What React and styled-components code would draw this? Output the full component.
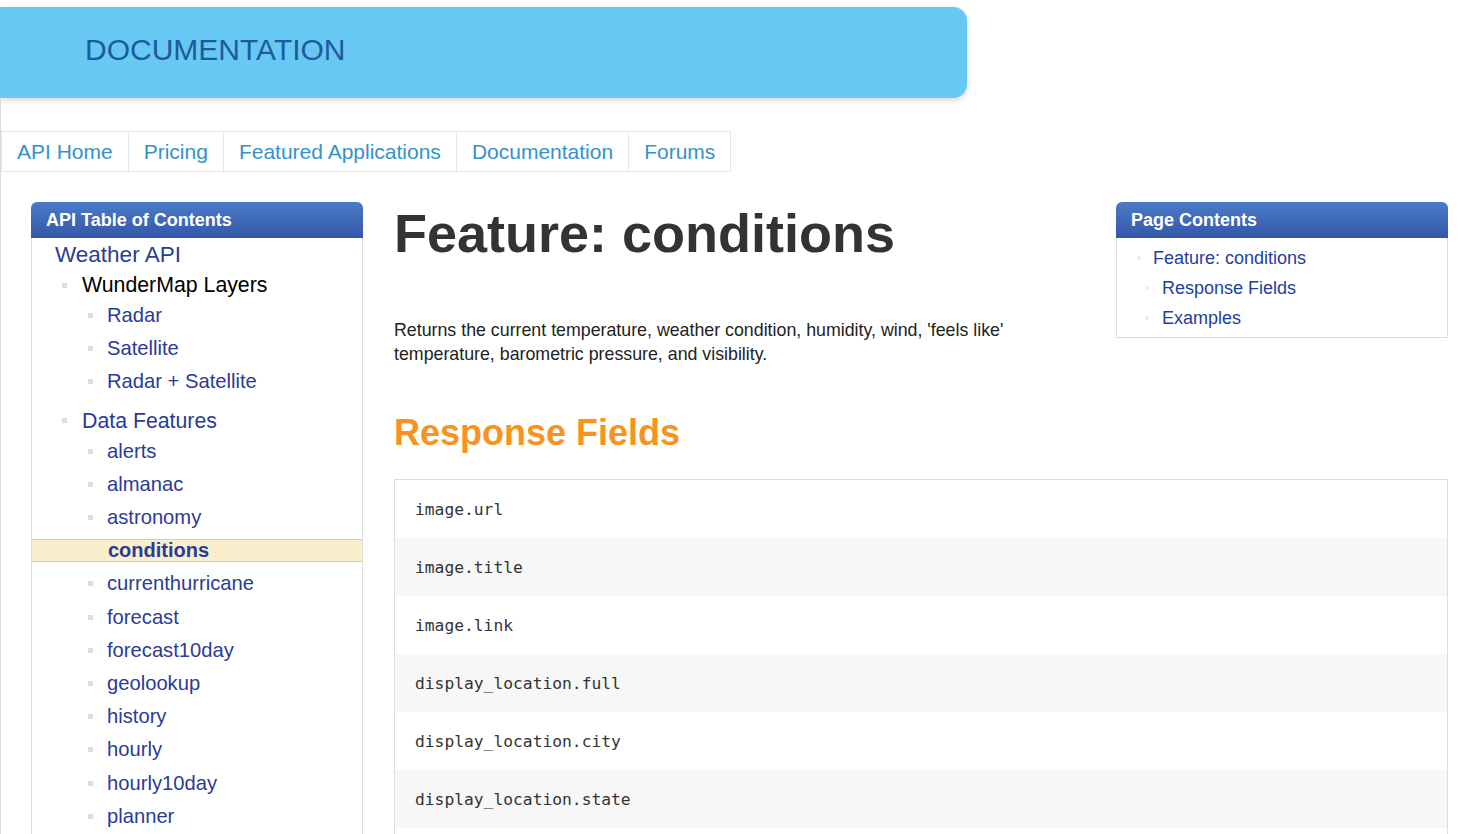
import React from 'react';
import styled, { createGlobalStyle } from 'styled-components';

const GlobalStyle = createGlobalStyle`
  body {
    margin: 0;
    background: #fff;
    font-family: "Liberation Sans", Arial, sans-serif;
  }
`;

const navItems = ['API Home', 'Pricing', 'Featured Applications', 'Documentation', 'Forums'];

const wunderMap = ['Radar', 'Satellite', 'Radar + Satellite'];

const features = [
  'alerts', 'almanac', 'astronomy', 'conditions', 'currenthurricane', 'forecast',
  'forecast10day', 'geolookup', 'history', 'hourly', 'hourly10day', 'planner',
];

const fields = [
  'image.url', 'image.title', 'image.link',
  'display_location.full', 'display_location.city', 'display_location.state',
];

export default function App() {
  return (
    <>
      <GlobalStyle />
      <Banner>
        <BannerTitle>DOCUMENTATION</BannerTitle>
      </Banner>
      <Page>
        <Nav>
          {navItems.map(item => (
            <NavItem key={item}>{item}</NavItem>
          ))}
        </Nav>
        <Columns>
          <Sidebar>
            <BoxHeader>API Table of Contents</BoxHeader>
            <SidebarBody>
              <RootLink>Weather API</RootLink>
              <GroupLabel plain>WunderMap Layers</GroupLabel>
              <SubList>
                {wunderMap.map(item => (
                  <SubItem key={item}>{item}</SubItem>
                ))}
              </SubList>
              <GroupLabel spaced>Data Features</GroupLabel>
              <SubList>
                {features.map(item =>
                  item === 'conditions'
                    ? <CurrentItem key={item}>{item}</CurrentItem>
                    : <SubItem key={item}>{item}</SubItem>
                )}
              </SubList>
            </SidebarBody>
          </Sidebar>

          <Main>
            <Top>
              <Intro>
                <Title>Feature: conditions</Title>
                <Lead>
                  Returns the current temperature, weather condition, humidity, wind, 'feels like'
                  temperature, barometric pressure, and visibility.
                </Lead>
              </Intro>
              <PageContents>
                <BoxHeader>Page Contents</BoxHeader>
                <ContentsBody>
                  <ContentsItem>Feature: conditions</ContentsItem>
                  <ContentsItem nested>Response Fields</ContentsItem>
                  <ContentsItem nested>Examples</ContentsItem>
                </ContentsBody>
              </PageContents>
            </Top>
            <Section>Response Fields</Section>
            <FieldTable>
              {fields.map((f, i) => (
                <FieldRow key={f} striped={i % 2 === 1}>{f}</FieldRow>
              ))}
              <FieldRow />
            </FieldTable>
          </Main>
        </Columns>
      </Page>
    </>
  );
}

const Banner = styled.div`
  margin-top: 7px;
  width: 967px;
  height: 91px;
  background: #67c8f3;
  border-radius: 0 14px 14px 0;
  box-shadow: 0 2px 6px rgba(0, 0, 0, 0.18);
  display: flex;
  align-items: center;
  box-sizing: border-box;
  padding-left: 85px;
  padding-bottom: 6px;
`;

const BannerTitle = styled.div`
  font-size: 30px;
  color: #1d5b9e;
`;

const Page = styled.div`
  border-left: 1px solid #dcdcdc;
  padding-top: 33px;
  min-height: 740px;
`;

const Nav = styled.div`
  display: flex;
  height: 39px;
  width: max-content;
  border: 1px solid #d9ecf5;
  border-right: none;
`;

const NavItem = styled.div`
  display: flex;
  align-items: center;
  padding: 0 15px;
  font-size: 21px;
  color: #3592c8;
  border-right: 1px solid #d9ecf5;
`;

const Columns = styled.div`
  display: flex;
  align-items: flex-start;
  padding: 30px 0 0 30px;
`;

const Sidebar = styled.div`
  width: 332px;
  flex-shrink: 0;
`;

const BoxHeader = styled.div`
  height: 36px;
  display: flex;
  align-items: center;
  padding-left: 15px;
  border-radius: 6px 6px 0 0;
  background: linear-gradient(#4b7bc6, #3457a7);
  color: #fff;
  font-weight: bold;
  font-size: 18px;
`;

const SidebarBody = styled.div`
  border: 1px solid #dddddd;
  border-top: none;
  padding-top: 1px;
  height: 620px;
`;

const RootLink = styled.div`
  padding-left: 23px;
  line-height: 32px;
  font-size: 22.5px;
  color: #2a3b98;
`;

const GroupLabel = styled.div`
  display: flex;
  align-items: center;
  padding-left: 30px;
  margin-top: ${p => (p.spaced ? '8px' : '0')};
  line-height: 28px;
  font-size: 21.3px;
  color: ${p => (p.plain ? '#000' : '#2a3b98')};

  &::before {
    content: '';
    width: 5px;
    height: 5px;
    background: #dddddd;
    margin-right: 15px;
  }
`;

const SubList = styled.div`
  display: flex;
  flex-direction: column;
`;

const SubItem = styled.div`
  display: flex;
  align-items: center;
  padding-left: 56px;
  height: 33.2px;
  font-size: 20.2px;
  color: #2a3b98;

  &::before {
    content: '';
    width: 5px;
    height: 5px;
    background: #dddddd;
    margin-right: 14px;
  }
`;

const CurrentItem = styled.div`
  display: flex;
  align-items: center;
  margin: 5px 0;
  height: 21.2px;
  padding-left: 76px;
  background: #faefcc;
  border-top: 1px solid #f5cf3f;
  border-bottom: 1px solid #f5cf3f;
  font-size: 20px;
  font-weight: bold;
  color: #2a3b98;
`;

const Main = styled.div`
  margin-left: 31px;
  width: 1054px;
  flex-shrink: 0;
`;

const Top = styled.div`
  display: flex;
  align-items: flex-start;
  gap: 26px;
`;

const Intro = styled.div`
  flex: 1;
`;

const Title = styled.h1`
  margin: 4px 0 0;
  font-size: 54px;
  line-height: 54px;
  font-weight: bold;
  color: #333;
`;

const Lead = styled.p`
  margin: 58px 0 0;
  font-size: 17.8px;
  line-height: 24px;
  color: #222;
`;

const PageContents = styled.div`
  width: 332px;
  flex-shrink: 0;
`;

const ContentsBody = styled.div`
  border: 1px solid #dddddd;
  border-top: none;
  padding: 5px 0 4px;
`;

const ContentsItem = styled.div`
  display: flex;
  align-items: center;
  height: 30px;
  padding-left: ${p => (p.nested ? '28px' : '20px')};
  font-size: 18px;
  color: #2240a0;

  &::before {
    content: '';
    width: 4px;
    height: 4px;
    background: #eeeeee;
    margin-right: ${p => (p.nested ? '13px' : '12px')};
  }
`;

const Section = styled.h2`
  margin: 47px 0 26px;
  font-size: 36px;
  line-height: 40px;
  font-weight: bold;
  color: #f7931e;
`;

const FieldTable = styled.div`
  border: 1px solid #dddddd;
  border-bottom: none;
`;

const FieldRow = styled.div`
  height: 58px;
  display: flex;
  align-items: center;
  padding-left: 20px;
  background: ${p => (p.striped ? '#f7f7f7' : '#fff')};
  font-family: "DejaVu Sans Mono", "Liberation Mono", monospace;
  font-size: 16.3px;
  color: #333;
`;
